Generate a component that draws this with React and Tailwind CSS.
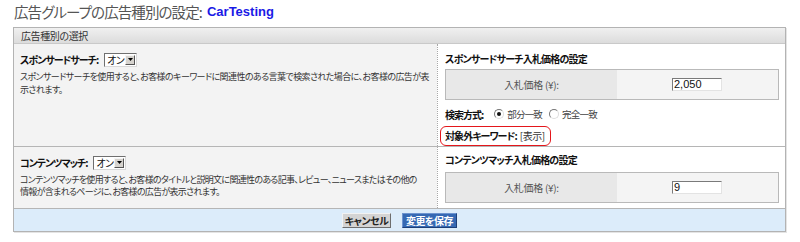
import React from "react";

const jp = "font-['Noto_Sans_CJK_JP','Noto_Sans',sans-serif] [font-feature-settings:'palt']";

function Select() {
  return (
    <div className="ml-[6px] flex h-[14px] w-[33px] shrink-0 items-stretch whitespace-nowrap border border-t-[#6f6f6f] border-l-[#6f6f6f] border-r-[#d8d8d8] border-b-[#d8d8d8] bg-white">
      <span className="flex-1 pl-[2px] text-[10px] leading-[12px] tracking-[-0.5px] text-[#111]">オン</span>
      <span className="m-px flex w-[10px] shrink-0 items-center justify-center border border-t-[#f4f4f4] border-l-[#f4f4f4] border-r-[#555] border-b-[#555] bg-[#d6d3ce]">
        <svg width="5" height="3" viewBox="0 0 5 3"><path d="M0 0h5L2.5 3z" fill="#000" /></svg>
      </span>
    </div>
  );
}

function Radio({ checked }) {
  return (
    <span className="flex h-[10px] w-[10px] items-center justify-center rounded-full border border-t-[#777] border-l-[#777] border-r-[#ddd] border-b-[#ddd] bg-white">
      {checked && <span className="h-[4px] w-[4px] rounded-full bg-[#111]" />}
    </span>
  );
}

function BidTable({ value }) {
  return (
    <div className="flex h-[31px] border border-[#b9b9b9]">
      <div className="flex w-[171px] items-center justify-center bg-[#e8e8e8] text-[10px] tracking-[-0.3px] text-[#555]">
        入札価格 (¥):
      </div>
      <div className="flex flex-1 items-center bg-[#f4f4f4] pl-[55px]">
        <div className="flex h-[13px] w-[50px] items-center border border-t-[#7a7a7a] border-l-[#7a7a7a] border-r-[#e3e3e3] border-b-[#e3e3e3] bg-white pl-[1px] font-['Liberation_Sans',sans-serif] text-[11px] text-[#111]">
          {value}
        </div>
      </div>
    </div>
  );
}

export default function App() {
  return (
    <div className={`h-[242px] w-[800px] bg-white text-[#222] ${jp}`}>
      <div className="flex h-[27px] items-center pb-[3px] pl-[14px]">
        <span className="text-[14.5px] tracking-[-0.9px] text-[#555]">広告グループの広告種別の設定:</span>
        <span className="ml-[5px] font-['Liberation_Sans',sans-serif] text-[13px] font-bold text-[#1a1ae6]">CarTesting</span>
      </div>
      <div className="ml-[13px] w-[773px] border border-[#b3b3b3] shadow-[1px_1px_0_#e4e4e4]">
        <div className="flex h-[16px] items-center border-b border-[#c9c9c9] bg-gradient-to-b from-[#f0f0f0] to-[#dcdcdc] pl-[7px] text-[10px] tracking-[-0.4px] text-[#333]">
          広告種別の選択
        </div>
        {/* Row 1 */}
        <div className="flex h-[103px] border-b border-[#b5b5b5]">
          <div className="w-[423px] shrink-0 overflow-hidden bg-[#f3f3f3] pl-[6px] pt-[8px]">
            <div className="flex items-center">
              <span className="whitespace-nowrap text-[10px] font-bold tracking-[-1px] text-[#111]">スポンサードサーチ:</span>
              <Select />
            </div>
            <p className="mt-[3px] whitespace-nowrap text-[9px] leading-[13px] tracking-[-0.58px] text-[#333]">
              スポンサードサーチを使用すると、お客様のキーワードに関連性のある言葉で検索された場合に、お客様の広告が表
              <br />
              示されます。
            </p>
          </div>
          <div className="flex-1 border-l border-dotted border-[#a8a8a8] pl-[7px] pr-[6px] pt-[7px]">
            <div className="h-[18px] whitespace-nowrap text-[10px] font-bold tracking-[-0.8px] text-[#111]">
              スポンサードサーチ入札価格の設定
            </div>
            <BidTable value="2,050" />
            <div className="mt-[7px] flex h-[14px] items-center whitespace-nowrap text-[9.5px] tracking-[-0.8px] text-[#444]">
              <span className="text-[10px] font-bold tracking-[-1px] text-[#111]">検索方式:</span>
              <span className="ml-[11px]"><Radio checked /></span>
              <span className="ml-[3px]">部分一致</span>
              <span className="ml-[7px]"><Radio /></span>
              <span className="ml-[3px]">完全一致</span>
            </div>
            <div className="-ml-[5px] mt-[4px] inline-flex h-[20px] items-center whitespace-nowrap rounded-[6px] border-[1.5px] border-[#e4161b] pl-[4px] pr-[5px] text-[10px]">
              <span className="font-bold tracking-[-0.9px] text-[#111]">対象外キーワード:</span>
              <span className="ml-[3px] tracking-[-0.5px] text-[#333]">[表示]</span>
            </div>
          </div>
        </div>
        {/* Row 2 */}
        <div className="flex h-[62px] border-b border-[#b5b5b5]">
          <div className="w-[423px] shrink-0 overflow-hidden bg-[#f3f3f3] pl-[6px] pt-[8px]">
            <div className="flex items-center">
              <span className="whitespace-nowrap text-[10px] font-bold tracking-[-1.1px] text-[#111]">コンテンツマッチ:</span>
              <Select />
            </div>
            <p className="mt-[4px] whitespace-nowrap text-[9px] leading-[12px] tracking-[-0.7px] text-[#333]">
              コンテンツマッチを使用すると、お客様のタイトルと説明文に関連性のある記事、レビュー、ニュースまたはその他の
              <br />
              情報が含まれるページに、お客様の広告が表示されます。
            </p>
          </div>
          <div className="flex-1 border-l border-dotted border-[#a8a8a8] pl-[7px] pr-[6px] pt-[5px]">
            <div className="h-[20px] whitespace-nowrap text-[10px] font-bold tracking-[-0.8px] text-[#111]">
              コンテンツマッチ入札価格の設定
            </div>
            <BidTable value="9" />
          </div>
        </div>
        {/* Buttons */}
        <div className="flex h-[22px] items-center justify-center gap-[11px] bg-[#dcecfa]">
          <button className="flex h-[15px] w-[49px] items-center justify-center whitespace-nowrap border border-t-[#f2f2f2] border-l-[#f2f2f2] border-r-[#6d6d6d] border-b-[#6d6d6d] bg-[#d4d4d4] text-[10px] font-bold tracking-[-0.5px] text-[#222]">
            キャンセル
          </button>
          <button className="flex h-[15px] w-[55px] items-center justify-center whitespace-nowrap border border-t-[#6d94cf] border-l-[#6d94cf] border-r-[#1d3f78] border-b-[#1d3f78] bg-[#3669b3] text-[10px] font-bold tracking-[-0.5px] text-white">
            変更を保存
          </button>
        </div>
      </div>
    </div>
  );
}
